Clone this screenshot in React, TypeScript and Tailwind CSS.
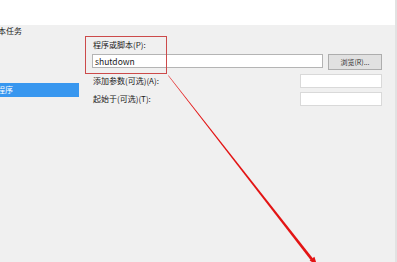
import React from "react";

const font = { fontFamily: '"Noto Sans CJK SC", "Noto Sans", sans-serif' };

export default function App() {
  return (
    <div
      className="relative w-[397px] h-[262px] flex bg-[#f0f0f0] overflow-hidden text-[8px] leading-[12px] text-[#202020]"
      style={font}
    >
      <div className="flex-1 flex flex-col">
        <div className="h-[25px] bg-white" />
        <div className="flex flex-1">
          <div className="w-[79px] flex flex-col">
            <div className="h-[12px] -ml-[10px] whitespace-nowrap">基本任务</div>
            <div className="mt-[46px] h-[14px] bg-[#3897ef] text-white leading-[14px] overflow-hidden">
              <span className="-ml-[3px] block">程序</span>
            </div>
          </div>
          <div className="flex-1 flex flex-col pl-[13px] pr-[13px]">
            <div className="mt-[14px] h-[12px] pl-[1px]">程序或脚本(P):</div>
            <div className="mt-[3px] flex items-start gap-[5px]">
              <div className="w-[231px] h-[14px] bg-white border border-[#b4b4b4] pl-[2px] leading-[12px] text-[8.5px] text-[#222]">
                shutdown
              </div>
              <div className="w-[54px] h-[16px] bg-[#e1e1e1] border border-[#adadad] flex items-center justify-center text-[7px] leading-[14px] text-[#333]">
                浏览(R)...
              </div>
            </div>
            <div className="mt-[4px] flex items-center justify-between h-[14px]">
              <span className="pl-[1px]">添加参数(可选)(A):</span>
              <div className="w-[82px] h-[14px] bg-white border border-[#d9d9d9]" />
            </div>
            <div className="mt-[4px] flex items-center justify-between h-[14px]">
              <span className="pl-[1px]">起始于(可选)(T):</span>
              <div className="w-[82px] h-[14px] bg-white border border-[#d9d9d9]" />
            </div>
          </div>
        </div>
      </div>
      <div className="w-[2px] bg-[#e2e2e2]" />
      <svg
        className="absolute inset-0 pointer-events-none"
        width="397"
        height="262"
        viewBox="0 0 397 262"
      >
        <rect x="85.5" y="36.5" width="81" height="37" fill="none" stroke="#cc4a4a" strokeWidth="1" />
        <polygon points="168,75.6 168.6,75.4 313,258.4 310.8,260.2" fill="#e31414" />
        <polygon points="317,265 309.6,260.6 314.4,256.8" fill="#e31414" />
      </svg>
    </div>
  );
}
